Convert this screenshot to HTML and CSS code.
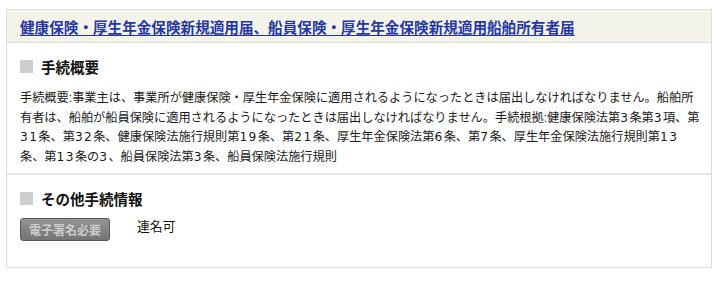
FILE: index.html
```html
<!DOCTYPE html>
<html lang="ja">
<head>
<meta charset="utf-8">
<link rel="stylesheet" href="styles.css">
</head>
<body>
<div class="box">
  <div class="head"><a href="#" class="title">健康保険・厚生年金保険新規適用届、船員保険・厚生年金保険新規適用船舶所有者届</a></div>
  <div class="section first">
    <h2 class="sh"><span class="sq"></span>手続概要</h2>
    <p class="txt">手続概要:事業主は、事業所が健康保険・厚生年金保険に適用されるようになったときは届出しなければなりません。船舶所有者は、船舶が船員保険に適用されるようになったときは届出しなければなりません。手続根拠:健康保険法第<span class="num">3</span>条第<span class="num">3</span>項、第<span class="num">31</span>条、第<span class="num">32</span>条、健康保険法施行規則第<span class="num">19</span>条、第<span class="num">21</span>条、厚生年金保険法第<span class="num">6</span>条、第<span class="num">7</span>条、厚生年金保険法施行規則第<span class="num">13</span>条、第<span class="num">13</span>条の<span class="num">3</span>、船員保険法第<span class="num">3</span>条、船員保険法施行規則</p>
  </div>
  <div class="section second">
    <h2 class="sh"><span class="sq"></span>その他手続情報</h2>
    <div class="row">
      <span class="btn">電子署名必要</span>
      <span class="rm">連名可</span>
    </div>
  </div>
</div>
</body>
</html>
```
FILE: styles.css
```css
body {
  margin: 0;
  background: #fff;
  font-family: "Liberation Sans", "Noto Sans CJK JP", sans-serif;
  color: #111;
}
.box {
  margin: 9px 9px 0 6px;
  width: 706px;
  height: 259px;
  border: 1px solid #dcdcdc;
  box-sizing: border-box;
}
.head {
  background: #f3f3e9;
  height: 33px;
  border-bottom: 1px solid #dedede;
  box-sizing: border-box;
  padding-left: 13px;
  display: flex;
  align-items: center;
}
.title {
  color: #2536a6;
  font-size: 14.6px;
  font-weight: bold;
  text-decoration: underline;
  text-underline-offset: 2px;
}
.section {
  padding: 0 13px;
}
.first {
  padding-top: 13px;
  padding-right: 11px;
  padding-bottom: 6px;
  border-bottom: 2px solid #e4e4e4;
}
.second {
  padding-top: 13px;
}
.sh {
  margin: 0;
  display: flex;
  align-items: center;
  font-size: 14.5px;
  font-weight: bold;
  height: 20px;
  color: #111;
}
.sq {
  width: 13px;
  height: 13px;
  background: #cfcfcf;
  margin-right: 8px;
}
.txt {
  margin: 13px 0 0;
  font-size: 12.2px;
  line-height: 19.5px;
  color: #1a1a1a;
}
.num {
  font-family: "DejaVu Sans", sans-serif;
  letter-spacing: 1.4px;
}
.row {
  display: flex;
  align-items: center;
  margin-top: 10px;
}
.btn {
  width: 90px;
  height: 23px;
  box-sizing: border-box;
  border: 1px solid #5a5a5a;
  border-radius: 3px;
  background: linear-gradient(#939393, #747474);
  color: #cdcdcd;
  font-size: 12px;
  font-weight: bold;
  display: flex;
  align-items: center;
  justify-content: center;
}
.rm {
  margin-left: 27px;
  margin-top: -6px;
  font-size: 12.8px;
  line-height: 16px;
}
```
